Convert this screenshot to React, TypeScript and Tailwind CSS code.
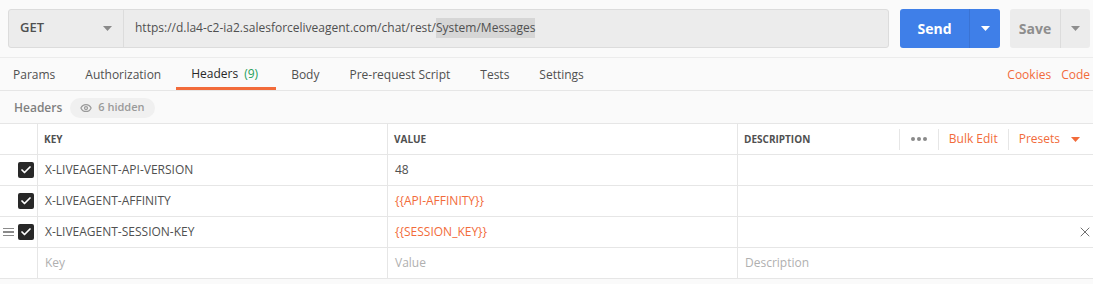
import { Check, X, Eye } from 'lucide-react';

const font = { fontFamily: '"Open Sans", "Liberation Sans", sans-serif' };

const rows = [
  { key: 'X-LIVEAGENT-API-VERSION', value: '48', variable: false },
  { key: 'X-LIVEAGENT-AFFINITY', value: '{{API-AFFINITY}}', variable: true },
  { key: 'X-LIVEAGENT-SESSION-KEY', value: '{{SESSION_KEY}}', variable: true, hovered: true },
];

const tabs = ['Params', 'Authorization', 'Headers', 'Body', 'Pre-request Script', 'Tests', 'Settings'];

function Caret({ className }: { className: string }) {
  return (
    <svg width="9" height="5" viewBox="0 0 9 5" className={className}>
      <path d="M0 0h9L4.5 5z" fill="currentColor" />
    </svg>
  );
}

function Checkbox() {
  return (
    <div className="w-4 h-4 rounded-[2px] bg-[#282828] flex items-center justify-center">
      <Check className="w-3 h-3 text-white" strokeWidth={3.5} />
    </div>
  );
}

export default function App() {
  return (
    <div className="w-[1093px] h-[284px] bg-[#fafafa] text-[#505050] overflow-hidden" style={font}>
      {/* Request bar */}
      <div className="flex items-center h-[58px] pl-2 pr-[3px] pb-[1px] border-b border-[#ececec]">
        <div className="flex h-[39px] flex-1 rounded-[3px] border border-[#dcdcdc] bg-[#ececec]">
          <div className="flex w-[115px] items-center justify-between pl-[11px] pr-[11px] border-r border-[#dcdcdc]">
            <span className="text-[13px] font-semibold text-[#505050]">GET</span>
            <Caret className="text-[#8a8a8a]" />
          </div>
          <div className="flex items-center pl-[11px] text-[12px] text-[#505050]">
            <span>https://d.la4-c2-ia2.salesforceliveagent.com/chat/rest/</span>
            <span className="bg-[#d6d6d6] leading-[20px]">System/Messages</span>
          </div>
        </div>
        <div className="ml-[11px] flex h-[39px] w-[100px] rounded-[3px] bg-[#3f7fe8] text-white">
          <div className="flex w-[69px] items-center justify-center text-[14px] font-bold">Send</div>
          <div className="flex flex-1 items-center justify-center border-l border-[#3a73d4]">
            <Caret className="text-white" />
          </div>
        </div>
        <div className="ml-[10px] flex h-[39px] w-[80px] rounded-[3px] bg-[#ececec] text-[#8e8e8e]">
          <div className="flex w-[50px] items-center justify-center text-[14px] font-bold">Save</div>
          <div className="flex flex-1 items-center justify-center border-l border-[#dcdcdc]">
            <Caret className="text-[#8e8e8e]" />
          </div>
        </div>
      </div>

      {/* Tabs */}
      <div className="flex h-[33px] items-stretch border-b border-[#e6e6e6] text-[12px]">
        {tabs.map((t) =>
          t === 'Headers' ? (
            <div key={t} className="flex items-center pl-[15px] pr-[18px] border-b-[3px] border-[#f26b3a] pt-[3px] text-[#282828]">
              Headers <span className="ml-[6px] text-[#26a05b]">(9)</span>
            </div>
          ) : (
            <div key={t} className="flex items-center px-[15px] pt-[1px] first:pl-[13px]">
              {t}
            </div>
          ),
        )}
        <div className="ml-auto flex items-center gap-[10px] pr-[3px] pt-[1px] text-[#f26b3a]">
          <span>Cookies</span>
          <span>Code</span>
        </div>
      </div>

      {/* Headers label */}
      <div className="flex items-center h-[32px] pl-[14px] pt-[1px]">
        <span className="text-[12px] font-semibold text-[#808080]">Headers</span>
        <div className="ml-2 flex h-[20px] items-center gap-[6px] rounded-full bg-[#f0f0f0] px-[10px] text-[11px] font-semibold text-[#9a9a9a]">
          <Eye className="w-3 h-3" strokeWidth={2.5} />
          <span>6 hidden</span>
        </div>
      </div>

      {/* Table */}
      <div className="bg-white border-t border-[#e6e6e6] text-[12px]">
        <div className="grid grid-cols-[38px_350px_350px_1fr] h-[31px] border-b border-[#e6e6e6]">
          <div className="border-r border-[#e6e6e6]" />
          <div className="flex items-center pl-[6px] border-r border-[#e6e6e6] text-[10px] font-bold text-[#505050]">KEY</div>
          <div className="flex items-center pl-[6px] border-r border-[#e6e6e6] text-[10px] font-bold text-[#505050]">VALUE</div>
          <div className="flex items-center pl-[6px] text-[10px] font-bold text-[#505050]">
            <span className="flex-1">DESCRIPTION</span>
            <div className="flex items-center h-[21px] border-l border-[#e6e6e6] px-[11px] gap-[2px]">
              <span className="w-[4px] h-[4px] rounded-full bg-[#8a8a8a]" />
              <span className="w-[4px] h-[4px] rounded-full bg-[#8a8a8a]" />
              <span className="w-[4px] h-[4px] rounded-full bg-[#8a8a8a]" />
            </div>
            <div className="flex items-center h-[21px] border-l border-[#e6e6e6] px-[10px] text-[12px] font-normal text-[#f26b3a]">Bulk Edit</div>
            <div className="flex items-center h-[21px] border-l border-[#e6e6e6] pl-[10px] pr-[13px] gap-[11px] text-[12px] font-normal text-[#f26b3a]">
              <span>Presets</span>
              <Caret className="text-[#f26b3a]" />
            </div>
          </div>
        </div>
        {rows.map((r) => (
          <div key={r.key} className="grid grid-cols-[38px_350px_350px_1fr] h-[31px] border-b border-[#e6e6e6]">
            <div className="flex items-center border-r border-[#e6e6e6]">
              <div className="w-[16px] flex flex-col items-center gap-[2px]">
                {r.hovered && (
                  <>
                    <span className="w-[11px] h-[1.5px] bg-[#8a8a8a]" />
                    <span className="w-[11px] h-[1.5px] bg-[#8a8a8a]" />
                    <span className="w-[11px] h-[1.5px] bg-[#8a8a8a]" />
                  </>
                )}
              </div>
              <div className="ml-[2px]">
                <Checkbox />
              </div>
            </div>
            <div className="flex items-center pl-[7px] border-r border-[#e6e6e6] text-[#505050]">{r.key}</div>
            <div className={`flex items-center pl-[7px] border-r border-[#e6e6e6] ${r.variable ? 'text-[#f26b3a]' : 'text-[#505050]'}`}>
              {r.value}
            </div>
            <div className="flex items-center justify-end">
              {r.hovered && <X className="w-4 h-4 text-[#707070]" strokeWidth={1.5} />}
            </div>
          </div>
        ))}
        <div className="grid grid-cols-[38px_350px_350px_1fr] h-[31px] border-b border-[#e6e6e6] text-[#b0b0b0]">
          <div className="border-r border-[#e6e6e6]" />
          <div className="flex items-center pl-[7px] border-r border-[#e6e6e6]">Key</div>
          <div className="flex items-center pl-[7px] border-r border-[#e6e6e6]">Value</div>
          <div className="flex items-center pl-[7px]">Description</div>
        </div>
      </div>
    </div>
  );
}
